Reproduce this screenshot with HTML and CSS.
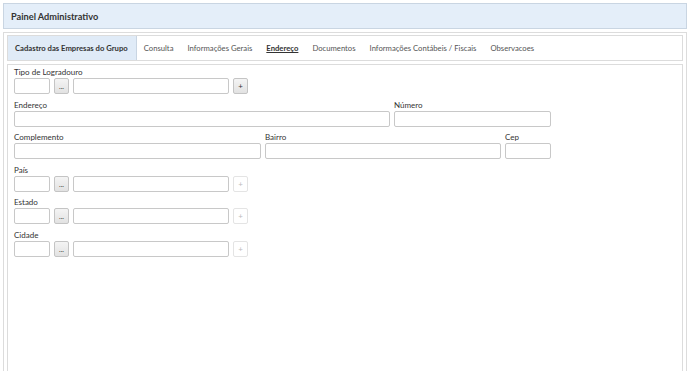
FILE: index.html
```html
<!DOCTYPE html>
<html lang="pt">
<head>
    <meta charset="UTF-8">
    <title>Painel Administrativo</title>
    <link rel="stylesheet" href="styles.css">
</head>
<body>
    <div class="painel-header">Painel Administrativo</div>

    <div class="painel-body">
        <div class="tabs">
            <span class="tab active">Cadastro das Empresas do Grupo</span>
            <span class="tab">Consulta</span>
            <span class="tab">Informações Gerais</span>
            <span class="tab current">Endereço</span>
            <span class="tab">Documentos</span>
            <span class="tab">Informações Contábeis / Fiscais</span>
            <span class="tab">Observacoes</span>
        </div>

        <div class="content">
            <div class="field">
                <label>Tipo de Logradouro</label>
                <div class="lookup">
                    <input type="text" class="code">
                    <button class="btn-dots">...</button>
                    <input type="text" class="desc">
                    <button class="btn-add">+</button>
                </div>
            </div>

            <div class="row">
                <div class="field">
                    <label>Endereço</label>
                    <input type="text" class="w-endereco">
                </div>
                <div class="field">
                    <label>Número</label>
                    <input type="text" class="w-numero">
                </div>
            </div>

            <div class="row">
                <div class="field">
                    <label>Complemento</label>
                    <input type="text" class="w-complemento">
                </div>
                <div class="field">
                    <label>Bairro</label>
                    <input type="text" class="w-bairro">
                </div>
                <div class="field">
                    <label>Cep</label>
                    <input type="text" class="w-cep">
                </div>
            </div>

            <div class="field">
                <label>País</label>
                <div class="lookup">
                    <input type="text" class="code">
                    <button class="btn-dots">...</button>
                    <input type="text" class="desc">
                    <button class="btn-add" disabled>+</button>
                </div>
            </div>

            <div class="field">
                <label>Estado</label>
                <div class="lookup">
                    <input type="text" class="code">
                    <button class="btn-dots">...</button>
                    <input type="text" class="desc">
                    <button class="btn-add" disabled>+</button>
                </div>
            </div>

            <div class="field">
                <label>Cidade</label>
                <div class="lookup">
                    <input type="text" class="code">
                    <button class="btn-dots">...</button>
                    <input type="text" class="desc">
                    <button class="btn-add" disabled>+</button>
                </div>
            </div>
        </div>
    </div>
</body>
</html>
```

FILE: styles.css
```css
/* Painel administrativo - aba Endereço */
html, body {
    height: 100%;
}

body {
    margin: 0;
    padding: 3px;
    box-sizing: border-box;
    font-family: Lato, "Open Sans", Arial, sans-serif;
    font-size: 8px;
    color: #333;
    background: #fff;
    display: flex;
    flex-direction: column;
}

.painel-header {
    height: 26px;
    padding: 0 7px;
    border: 1px solid #c9d5e2;
    background-color: #e4eef9;
    display: flex;
    align-items: center;
    font-weight: bold;
    font-size: 9.2px;
    color: #333;
    box-sizing: border-box;
}

.painel-body {
    flex: 1;
    margin-top: 3px;
    padding: 2px 3px 0 3px;
    border: 1px solid #dcdcdc;
    border-bottom: none;
    display: flex;
    flex-direction: column;
}

.tabs {
    height: 26px;
    border: 1px solid #dcdcdc;
    display: flex;
    align-items: stretch;
    box-sizing: border-box;
    font-size: 7.7px;
}

.tab {
    display: flex;
    align-items: center;
    padding: 0 7px;
    color: #555;
}

.tab.active {
    padding: 0 8px 0 7px;
    background-color: #e0ebf7;
    border-right: 1px solid #c9d5e2;
    font-weight: bold;
    color: #333;
}

.tab.current {
    font-weight: bold;
    text-decoration: underline;
    color: #333;
}

.content {
    flex: 1;
    margin-top: 3px;
    padding: 1px 6px;
    border: 1px solid #dcdcdc;
    border-bottom: none;
}

.field {
    margin-bottom: 4.6px;
}

.field label {
    display: block;
    height: 12px;
    line-height: 12px;
    color: #333;
}

.row {
    display: flex;
    gap: 4px;
}

.lookup {
    display: flex;
    gap: 4px;
}

input[type="text"] {
    display: block;
    height: 16px;
    padding: 0 3px;
    border: 1px solid #c8c8c8;
    border-radius: 2px;
    box-sizing: border-box;
    font-family: inherit;
    font-size: 8px;
}

.code { width: 36px; }
.desc { width: 156px; }
.w-endereco { width: 376px; }
.w-numero { width: 157px; }
.w-complemento { width: 247px; }
.w-bairro { width: 236px; }
.w-cep { width: 46px; }

.btn-dots,
.btn-add {
    width: 15px;
    height: 16px;
    padding: 0;
    border: 1px solid #c4c4c4;
    border-radius: 2px;
    background: linear-gradient(#f4f4f4, #e2e2e2);
    font-family: inherit;
    font-size: 8px;
    line-height: 12px;
    color: #333;
}

.btn-dots {
    line-height: 10px;
    font-size: 7px;
}

.btn-add:disabled {
    background: #fff;
    border-color: #e4e4e4;
    color: #bbb;
}
```
